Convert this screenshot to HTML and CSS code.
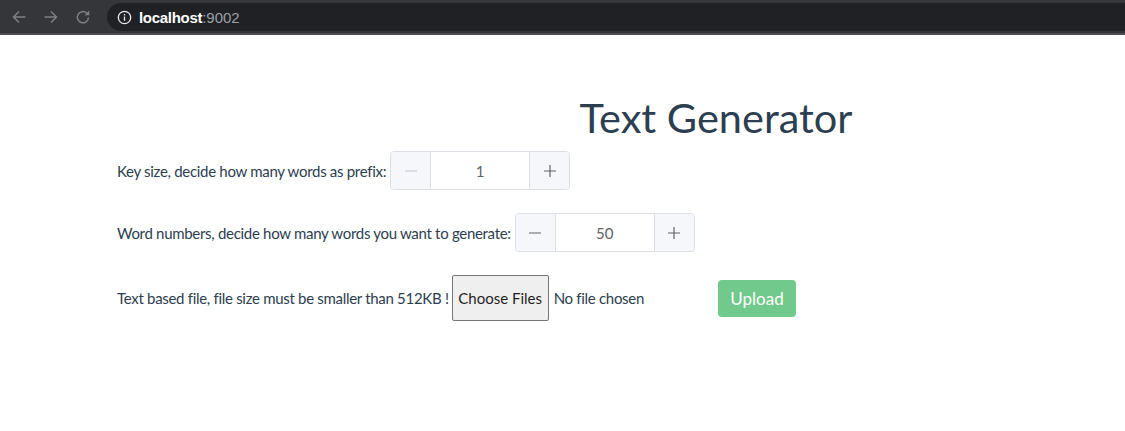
FILE: index.html
```html
<!DOCTYPE html>
<html lang="en">
<head>
<meta charset="utf-8">
<title>Text Generator</title>
<link rel="stylesheet" href="styles.css">
</head>
<body>
<div class="chrome">
  <div class="nav">
    <svg class="nav-icon" viewBox="0 0 16 16" width="16" height="16"><path d="M14.5 8H2.5M8 2.5L2.5 8 8 13.5" fill="none" stroke="#7d8085" stroke-width="1.5"/></svg>
    <svg class="nav-icon" viewBox="0 0 16 16" width="16" height="16"><path d="M1.5 8h12M8 2.5l5.5 5.5L8 13.5" fill="none" stroke="#7d8085" stroke-width="1.5"/></svg>
    <svg class="nav-icon" viewBox="0 0 16 16" width="16" height="16"><path d="M13.5 8.5A5.6 5.6 0 1 1 11.8 4.2" fill="none" stroke="#7d8085" stroke-width="1.5"/><path d="M14.3 1.5v4.8H9.5z" fill="#7d8085"/></svg>
  </div>
  <div class="omnibox">
    <svg class="info" viewBox="0 0 16 16" width="15" height="15"><circle cx="8" cy="8" r="6.6" fill="none" stroke="#e8eaed" stroke-width="1.4"/><rect x="7.3" y="7" width="1.4" height="4.5" fill="#e8eaed"/><rect x="7.3" y="4.3" width="1.4" height="1.5" fill="#e8eaed"/></svg>
    <span class="host">localhost</span><span class="port">:9002</span>
  </div>
</div>

<main class="app">
  <h1 class="title">Text Generator</h1>

  <div class="row row-key">
    <label class="label">Key size, decide how many words as prefix:</label>
    <div class="number">
      <span class="step step-minus disabled">
        <svg viewBox="0 0 14 14" width="14" height="14"><path d="M1 7h12" stroke="currentColor" stroke-width="1.2"/></svg>
      </span>
      <span class="value">1</span>
      <span class="step step-plus">
        <svg viewBox="0 0 14 14" width="14" height="14"><path d="M1 7h12M7 1v12" stroke="currentColor" stroke-width="1.2"/></svg>
      </span>
    </div>
  </div>

  <div class="row row-words">
    <label class="label">Word numbers, decide how many words you want to generate:</label>
    <div class="number">
      <span class="step step-minus">
        <svg viewBox="0 0 14 14" width="14" height="14"><path d="M1 7h12" stroke="currentColor" stroke-width="1.2"/></svg>
      </span>
      <span class="value">50</span>
      <span class="step step-plus">
        <svg viewBox="0 0 14 14" width="14" height="14"><path d="M1 7h12M7 1v12" stroke="currentColor" stroke-width="1.2"/></svg>
      </span>
    </div>
  </div>

  <div class="row row-file">
    <label class="label">Text based file, file size must be smaller than 512KB !</label>
    <button class="choose" type="button">Choose Files</button>
    <span class="nofile">No file chosen</span>
    <button class="upload" type="button">Upload</button>
  </div>
</main>
</body>
</html>
```

FILE: styles.css
```css
* { box-sizing: border-box; }

html, body {
  margin: 0;
  padding: 0;
  background: #ffffff;
}

body {
  font-family: Lato, "Liberation Sans", sans-serif;
  color: #2c3e50;
  width: 1125px;
  height: 431px;
  overflow: hidden;
}

/* Browser chrome */
.chrome {
  height: 35px;
  background: #35363a;
  border-bottom: 2px solid #4a4c50;
  display: flex;
  align-items: center;
  padding-top: 1px;
}

.nav {
  display: flex;
  align-items: center;
  gap: 16px;
  padding-left: 11px;
  width: 107px;
}

.nav-icon { display: block; }

.omnibox {
  flex: 1;
  height: 28px;
  background: #202124;
  border-radius: 14px 0 0 14px;
  display: flex;
  align-items: center;
  padding-left: 10px;
  font-family: "Liberation Sans", Arial, sans-serif;
  font-size: 15px;
}

.info { margin-right: 7px; }

.host { color: #ffffff; font-weight: 700; letter-spacing: -0.3px; }
.port { color: #9aa0a6; }

/* App */
.app {
  padding: 57px 0 0 117px;
}

.title {
  margin: 0 0 9px 0;
  padding-left: 190px;
  text-align: center;
  font-size: 41.5px;
  font-weight: 400;
  line-height: 50px;
  color: #2c3e50;
}

.row {
  display: flex;
  align-items: center;
}

.row-words { margin-top: 23px; }
.row-file { margin-top: 23px; }

.label {
  font-size: 15px;
  letter-spacing: -0.3px;
  margin-right: 4px;
}

.number {
  display: flex;
  width: 180px;
  height: 39px;
  border: 1px solid #dcdfe6;
  border-radius: 4px;
  overflow: hidden;
}

.step {
  width: 40px;
  background: #f5f7fa;
  color: #606266;
  display: flex;
  align-items: center;
  justify-content: center;
}

.step-minus { border-right: 1px solid #dcdfe6; }
.step-plus { border-left: 1px solid #dcdfe6; }

.step.disabled { color: #c0c4cc; }

.value {
  flex: 1;
  display: flex;
  align-items: center;
  justify-content: center;
  font-size: 15px;
  color: #606266;
}

.choose {
  height: 46px;
  width: 97px;
  margin-left: -1px;
  padding: 0;
  font-family: Lato, "Liberation Sans", sans-serif;
  font-size: 15px;
  color: #1f1f1f;
  background: #efefef;
  border: 1px solid #767676;
  border-radius: 2px;
}

.nofile {
  font-size: 15px;
  letter-spacing: -0.3px;
  margin-left: 5px;
}

.upload {
  margin-left: 74px;
  width: 78px;
  height: 37px;
  border: none;
  border-radius: 4px;
  background: #71c98b;
  color: #ffffff;
  font-family: Lato, "Liberation Sans", sans-serif;
  font-size: 17px;
  padding: 0;
}
```
